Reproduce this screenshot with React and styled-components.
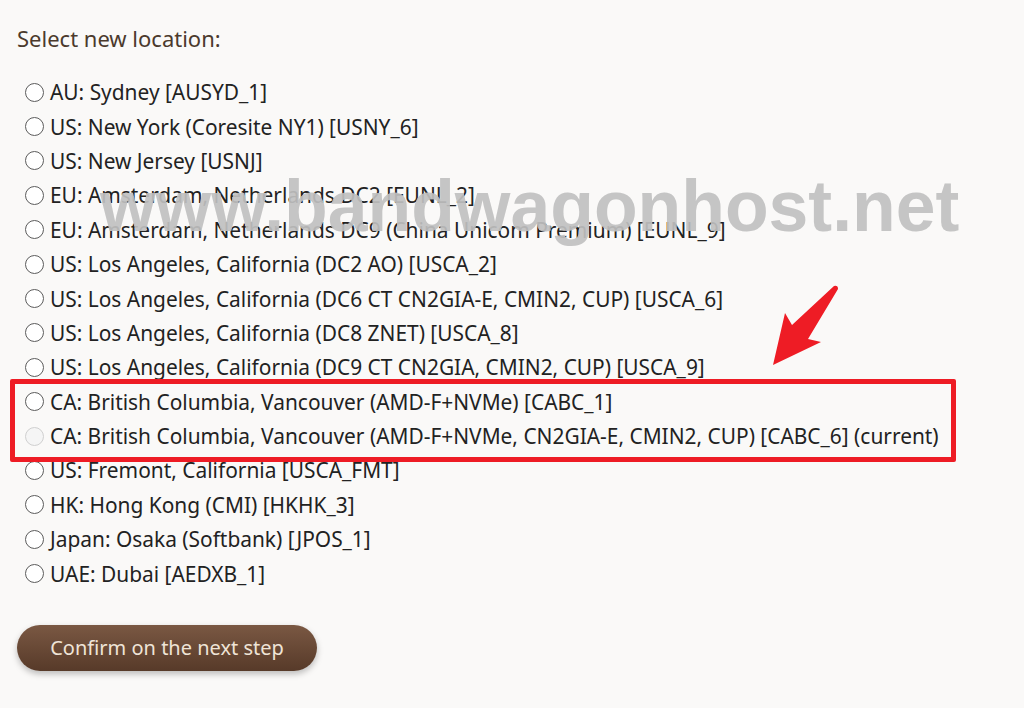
import React from "react";
import styled, { createGlobalStyle } from "styled-components";

const locations = [
  { id: "AUSYD_1", label: "AU: Sydney [AUSYD_1]" },
  { id: "USNY_6", label: "US: New York (Coresite NY1) [USNY_6]" },
  { id: "USNJ", label: "US: New Jersey [USNJ]" },
  { id: "EUNL_2", label: "EU: Amsterdam, Netherlands DC2 [EUNL_2]" },
  { id: "EUNL_9", label: "EU: Amsterdam, Netherlands DC9 (China Unicom Premium) [EUNL_9]" },
  { id: "USCA_2", label: "US: Los Angeles, California (DC2 AO) [USCA_2]" },
  { id: "USCA_6", label: "US: Los Angeles, California (DC6 CT CN2GIA-E, CMIN2, CUP) [USCA_6]" },
  { id: "USCA_8", label: "US: Los Angeles, California (DC8 ZNET) [USCA_8]" },
  { id: "USCA_9", label: "US: Los Angeles, California (DC9 CT CN2GIA, CMIN2, CUP) [USCA_9]" },
];

const highlighted = [
  { id: "CABC_1", label: "CA: British Columbia, Vancouver (AMD-F+NVMe) [CABC_1]" },
  {
    id: "CABC_6",
    label: "CA: British Columbia, Vancouver (AMD-F+NVMe, CN2GIA-E, CMIN2, CUP) [CABC_6] (current)",
    current: true,
  },
];

const rest = [
  { id: "USCA_FMT", label: "US: Fremont, California [USCA_FMT]" },
  { id: "HKHK_3", label: "HK: Hong Kong (CMI) [HKHK_3]" },
  { id: "JPOS_1", label: "Japan: Osaka (Softbank) [JPOS_1]" },
  { id: "AEDXB_1", label: "UAE: Dubai [AEDXB_1]" },
];

function Option({ item }) {
  return (
    <Row>
      <Radio type="radio" name="location" disabled={item.current} />
      <span>{item.label}</span>
    </Row>
  );
}

export default function App() {
  return (
    <Page>
      <GlobalStyle />
      <Heading>Select new location:</Heading>
      <List>
        {locations.map((l) => (
          <Option key={l.id} item={l} />
        ))}
        <Highlight>
          {highlighted.map((l) => (
            <Option key={l.id} item={l} />
          ))}
        </Highlight>
        {rest.map((l) => (
          <Option key={l.id} item={l} />
        ))}
      </List>
      <ConfirmButton>Confirm on the next step</ConfirmButton>
      <Watermark>www.bandwagonhost.net</Watermark>
      <Arrow width="70" height="84" viewBox="0 0 70 84">
        <path d="M63 2 Q67 1 67 5 L37 55 L50 58 L2 81 L14 29 L21 41 Z" fill="#ee1c25" />
      </Arrow>
    </Page>
  );
}

const GlobalStyle = createGlobalStyle`
  html, body {
    margin: 0;
    background: #faf9f8;
  }
  body {
    font-family: "Noto Sans", "Open Sans", sans-serif;
  }
`;

const Page = styled.div`
  position: relative;
  width: 1024px;
  height: 708px;
  box-sizing: border-box;
  padding: 22px 0 0 17px;
  overflow: hidden;
`;

const Heading = styled.div`
  font-size: 22px;
  color: #4b3a2d;
  line-height: 32px;
`;

const List = styled.div`
  display: flex;
  flex-direction: column;
  margin-top: 21px;
  padding-left: 8px;
`;

const Row = styled.label`
  display: flex;
  align-items: center;
  gap: 6px;
  height: 34.4px;
  font-size: 20.9px;
  color: #222;
  white-space: nowrap;
`;

const Radio = styled.input`
  appearance: none;
  margin: 0;
  width: 19px;
  height: 19px;
  border-radius: 50%;
  border: 1.5px solid #5c5c5c;
  background: #fff;
  box-sizing: border-box;
  flex: none;
  &:disabled {
    border-color: #d0d0d0;
    background: #f5f5f5;
  }
`;

const Highlight = styled.div`
  position: relative;
  &::after {
    content: "";
    position: absolute;
    top: -6px;
    bottom: -9px;
    left: -15px;
    width: 946px;
    box-sizing: border-box;
    border: 5px solid #ee1c25;
    border-radius: 2px;
    pointer-events: none;
  }
`;

const ConfirmButton = styled.button`
  margin-top: 34px;
  width: 300px;
  height: 46px;
  border: none;
  border-radius: 23px;
  background: linear-gradient(#7a5843, #573a29);
  color: #efe4d7;
  font-family: "Noto Sans", sans-serif;
  font-size: 20px;
  box-shadow: 0 3px 6px rgba(0, 0, 0, 0.25);
`;

const Watermark = styled.div`
  position: absolute;
  left: 100px;
  top: 171px;
  font-family: "Liberation Sans", Arial, sans-serif;
  font-weight: bold;
  font-size: 71.5px;
  line-height: 1;
  color: rgba(192, 192, 192, 0.92);
  pointer-events: none;
`;

const Arrow = styled.svg`
  position: absolute;
  left: 771px;
  top: 284px;
`;
